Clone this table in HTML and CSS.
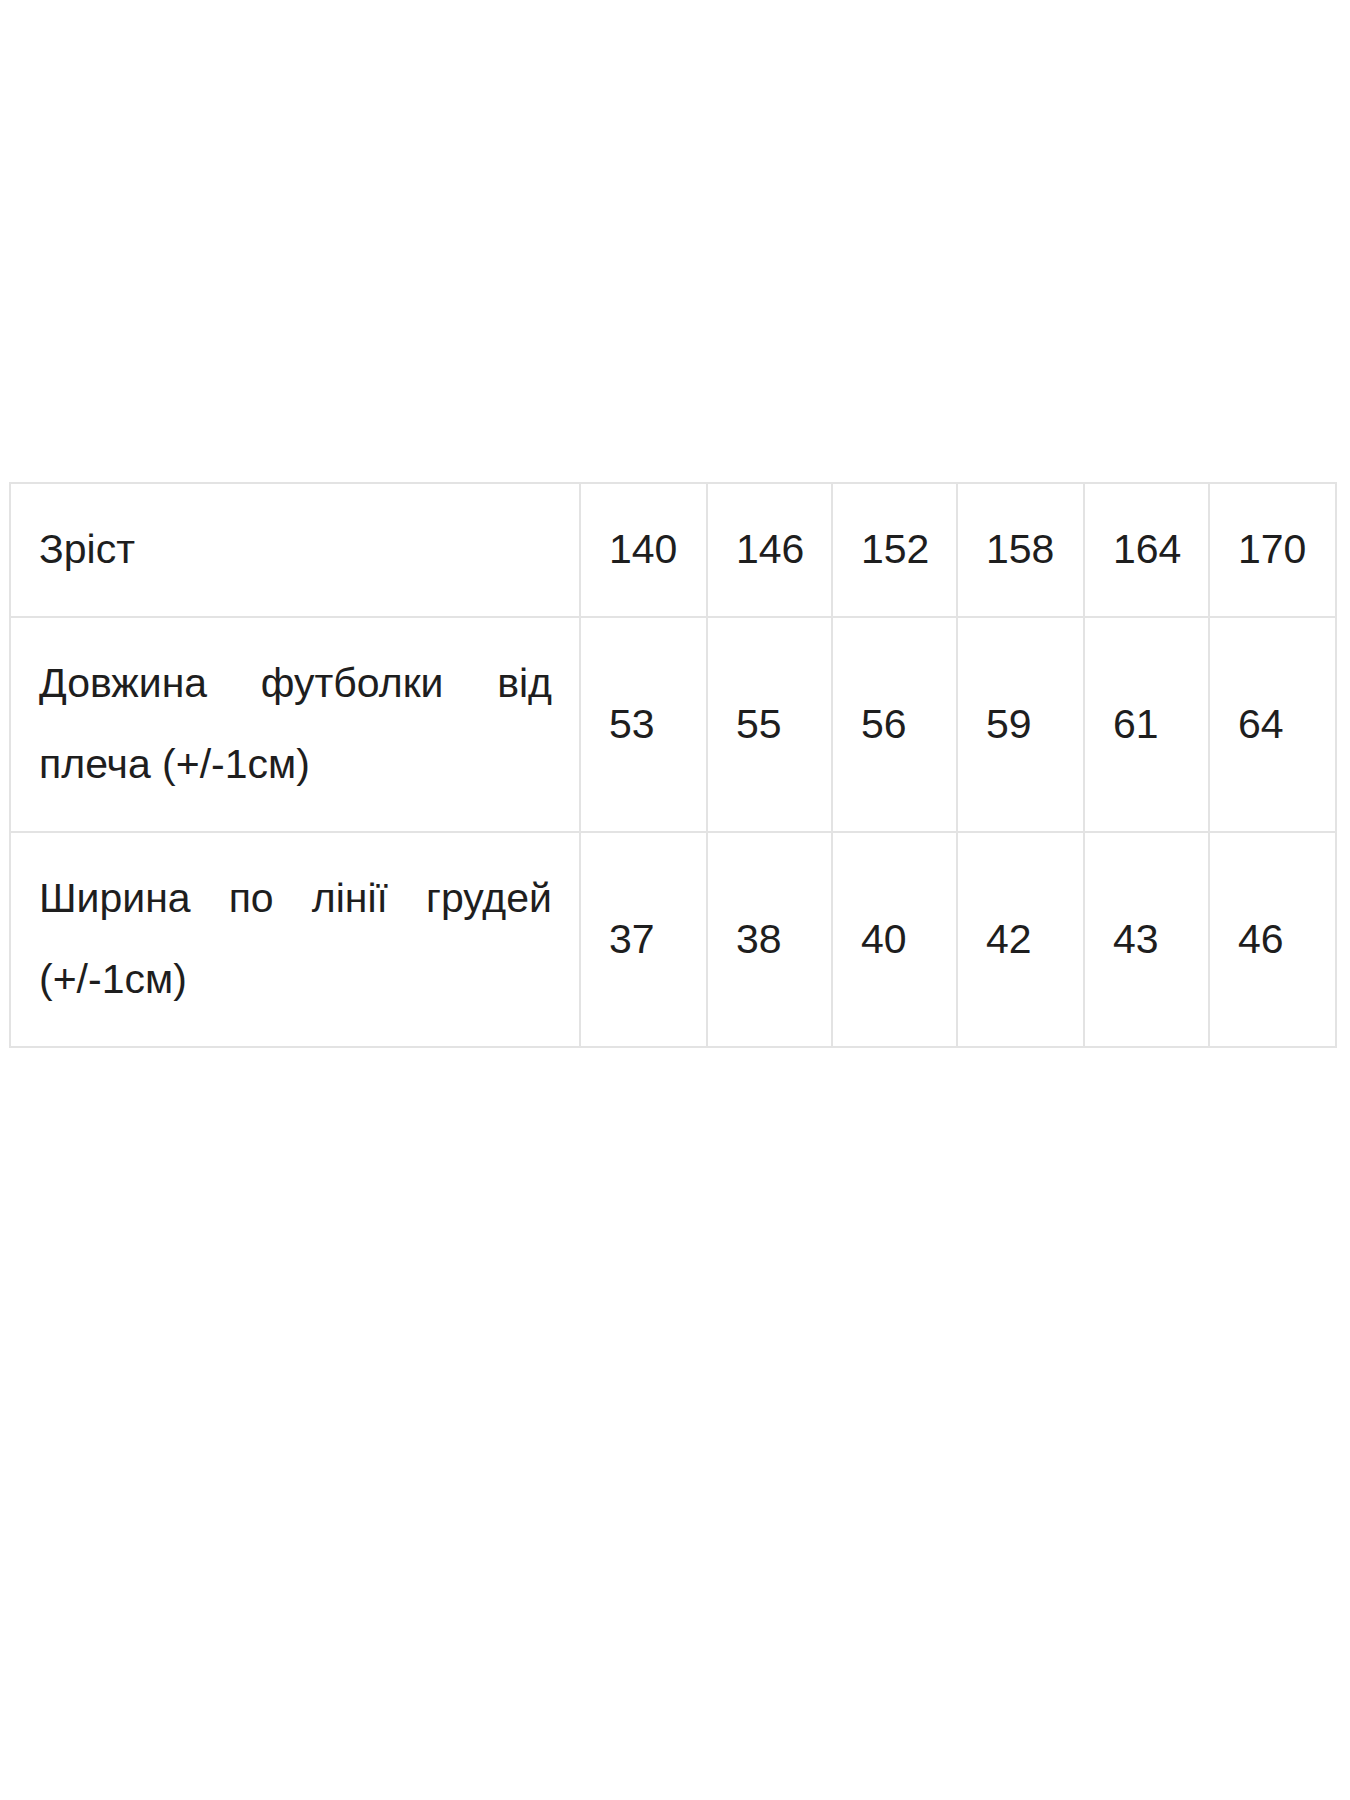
FILE: index.html
```html
<!DOCTYPE html>
<html lang="uk">
<head>
<meta charset="utf-8">
<title>Розмірна сітка</title>
<link rel="stylesheet" href="styles.css">
</head>
<body>
<div class="page">
  <table class="sizes">
    <colgroup>
      <col class="c-label">
      <col class="c-a">
      <col class="c-b">
      <col class="c-b">
      <col class="c-a">
      <col class="c-b">
      <col class="c-a">
    </colgroup>
    <tbody>
      <tr>
        <td class="label">Зріст</td>
        <td>140</td><td>146</td><td>152</td><td>158</td><td>164</td><td>170</td>
      </tr>
      <tr>
        <td class="label">Довжина футболки від плеча (+/-1см)</td>
        <td>53</td><td>55</td><td>56</td><td>59</td><td>61</td><td>64</td>
      </tr>
      <tr>
        <td class="label">Ширина по лінії грудей (+/-1см)</td>
        <td>37</td><td>38</td><td>40</td><td>42</td><td>43</td><td>46</td>
      </tr>
    </tbody>
  </table>
</div>
</body>
</html>
```

FILE: styles.css
```css
html, body {
  margin: 0;
  padding: 0;
  background: #ffffff;
}

.page {
  padding: 482px 0 0 9px;
}

.sizes {
  border-collapse: collapse;
  table-layout: fixed;
  width: 1328px;
  font-family: "Liberation Sans", Arial, sans-serif;
  font-size: 41px;
  line-height: 81px;
  color: #1e1e1e;
}

.c-label { width: 570px; }
.c-a { width: 127px; }
.c-b { width: 125px; }

.sizes td {
  border: 2px solid #e3e3e3;
  padding: 25px 27px 26px 28px;
  vertical-align: middle;
  text-align: left;
}

.sizes td.label {
  text-align: justify;
}
```
